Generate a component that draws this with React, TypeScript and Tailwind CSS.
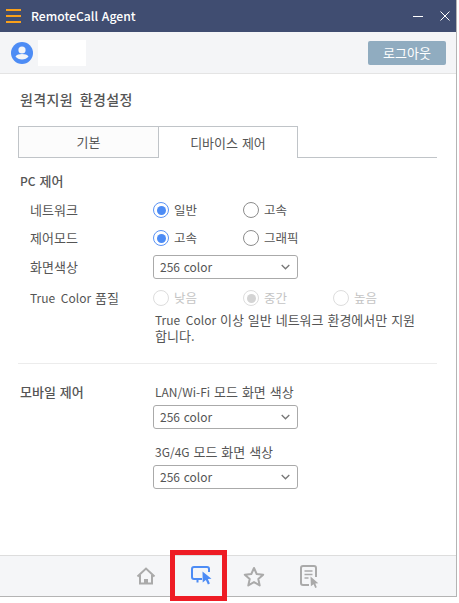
const font = "font-['Noto_Sans_CJK_KR','Noto_Sans',sans-serif]";

function Radio({ label, checked, disabled, width }: { label: string; checked?: boolean; disabled?: boolean; width: string }) {
  const ring = disabled ? "border-[#dddddd]" : checked ? "border-[#5b93f5]" : "border-[#8c8c8c]";
  const dot = disabled ? "bg-[#d4d4d4]" : "bg-[#4d8cf5]";
  return (
    <div className={`flex items-center gap-[5px] ${width}`}>
      <span className={`flex h-[16px] w-[16px] items-center justify-center rounded-full border-[1.5px] ${ring}`}>
        {checked && <span className={`h-[9px] w-[9px] rounded-full ${dot}`} />}
      </span>
      <span className={`text-[12.5px] ${disabled ? "text-[#c4c4c4]" : "text-[#555555]"}`}>{label}</span>
    </div>
  );
}

function ColorSelect() {
  return (
    <div className="flex h-[24px] w-[145px] items-center justify-between rounded-[3px] border border-[#aaaaaa] bg-white pl-[6px] pr-[7px] text-[12px] text-[#555555]">
      <span>256 color</span>
      <svg width="9" height="6" viewBox="0 0 9 6" fill="none" stroke="#777777" strokeWidth="1.3">
        <path d="M.7 1l3.800 3.800L8.300 1" />
      </svg>
    </div>
  );
}

function HomeIcon() {
  return (
    <svg width="20" height="18" viewBox="0 0 20 18" fill="none" stroke="#aaaaaa" strokeWidth="2">
      <path d="M1.500 9.500L10 1.500l8.500 8" />
      <path d="M4 8v8.500h12V8" />
      <path d="M8 17v-5h4v5" fill="#aaaaaa" stroke="none" />
    </svg>
  );
}

function RemoteIcon() {
  return (
    <svg width="22" height="20" viewBox="0 0 22 20" fill="none">
      <path d="M11 13H3a2 2 0 01-2-2V3a2 2 0 012-2h13a2 2 0 012 2v3" stroke="#4d8cf5" strokeWidth="2" />
      <path d="M6.500 13v3.500" stroke="#4d8cf5" strokeWidth="2" />
      <path d="M11.500 5.500l9 7.200-3.600.4 2 4.500-2 .9-2-4.500-3.200 2.400z" fill="#4d8cf5" />
    </svg>
  );
}

function StarIcon() {
  return (
    <svg width="22" height="21" viewBox="0 0 22 21" fill="none" stroke="#aaaaaa" strokeWidth="2" strokeLinejoin="round">
      <path d="M11 2l2.700 6 6.500.7-4.900 4.300 1.400 6.400L11 16.100l-5.700 3.300 1.400-6.400-4.900-4.300 6.500-.7z" />
    </svg>
  );
}

function ReportIcon() {
  return (
    <svg width="19" height="23" viewBox="0 0 19 23" fill="none">
      <path d="M9 20H3a2 2 0 01-2-2V3a2 2 0 012-2h11a2 2 0 012 2v9" stroke="#aaaaaa" strokeWidth="2" />
      <path d="M4.500 6h8M4.500 9.500h8M4.500 13h4" stroke="#aaaaaa" strokeWidth="1.600" />
      <path d="M10.500 11.500l7.800 6.800-3 .3 1.500 3.600-1.600.7-1.600-3.600-2.700 2z" fill="#aaaaaa" />
    </svg>
  );
}

export default function App() {
  return (
    <div className={`${font} relative flex h-[603px] w-[459px] bg-white text-[13px] text-[#555555] [word-spacing:1px]`}>
      <div className="flex h-[597px] w-[456px] flex-col border-b border-[#b4b4b4]">
        <header className="flex h-[32px] shrink-0 items-center bg-[#404d71] pl-[6px] pr-[6px] text-white">
          <div className="flex h-[14px] w-[15px] flex-col justify-between">
            <span className="h-[2px] bg-[#f9a01b]" />
            <span className="h-[2px] bg-[#f9a01b]" />
            <span className="h-[2px] bg-[#f9a01b]" />
          </div>
          <span className="ml-[10px] text-[12.2px] font-medium">RemoteCall Agent</span>
          <div className="ml-auto flex items-center gap-[17px]">
            <span className="h-[1px] w-[10px] bg-white" />
            <svg width="10" height="10" viewBox="0 0 10 10" stroke="white" strokeWidth="1">
              <path d="M.5.500l9 9M9.500.500l-9 9" />
            </svg>
          </div>
        </header>

        <div className="flex h-[42px] shrink-0 items-center border-b border-[#e4e4e4] bg-[#f4f5f7] pl-[11px] pr-[10px]">
          <svg width="22" height="22" viewBox="0 0 22 22">
            <circle cx="11" cy="11" r="11" fill="#4d8cf5" />
            <circle cx="11" cy="8" r="3.600" fill="#f4f5f7" />
            <path d="M4.500 14.500c1.200-1.800 3.600-2.500 6.500-2.500s5.300.7 6.500 2.500c-1.400 2-3.800 3-6.500 3s-5.100-1-6.500-3z" fill="#f4f5f7" />
          </svg>
          <div className="ml-[5px] h-[26px] w-[48px] bg-white" />
          <button className="ml-auto h-[24px] w-[78px] rounded-[2px] bg-[#90acc0] text-[13px] text-white">로그아웃</button>
        </div>

        <main className="min-h-0 flex-1 pl-[18px] pr-[19px]">
          <h1 className="ml-[2px] mt-[15px] text-[14px] font-medium leading-[20px] tracking-[0.4px] text-[#555555] [word-spacing:3px]">원격지원 환경설정</h1>

          <div className="mt-[17px] flex h-[32px] border-b border-[#c0c4c8]">
            <div className="flex h-[32px] w-[141px] items-center justify-center border border-[#c0c4c8] bg-[#fcfcfc]">기본</div>
            <div className="flex h-[32px] w-[139px] items-center justify-center border border-l-0 border-b-0 border-[#c0c4c8] bg-white">디바이스 제어</div>
          </div>

          <h2 className="ml-[2px] mt-[14px] font-medium leading-[18px] text-[#555555]">
            <span className="text-[12px]">PC</span> 제어
          </h2>

          <div className="mt-[10px] flex h-[20px] items-center pl-[12px]">
            <span className="w-[123px]">네트워크</span>
            <Radio label="일반" checked width="w-[90px]" />
            <Radio label="고속" width="w-[90px]" />
          </div>
          <div className="mt-[8px] flex h-[20px] items-center pl-[12px]">
            <span className="w-[123px]">제어모드</span>
            <Radio label="고속" checked width="w-[90px]" />
            <Radio label="그래픽" width="w-[90px]" />
          </div>
          <div className="mt-[7px] flex h-[24px] items-center pl-[12px]">
            <span className="w-[123px]">화면색상</span>
            <ColorSelect />
          </div>
          <div className="mt-[9px] flex h-[20px] items-center pl-[12px]">
            <span className="w-[123px]">
              <span className="text-[12px] [word-spacing:3px]">True Color</span> 품질
            </span>
            <Radio label="낮음" disabled width="w-[90px]" />
            <Radio label="중간" checked disabled width="w-[90px]" />
            <Radio label="높음" disabled width="w-[90px]" />
          </div>
          <p className="ml-[137px] mt-[4px] w-[265px] break-keep leading-[16px]">
            <span className="text-[12px] [word-spacing:3px]">True Color</span> 이상 일반 네트워크 환경에서만 지원 합니다.
          </p>

          <div className="mt-[19px] border-t border-[#ececec]" />

          <div className="mt-[18px] flex">
            <span className="ml-[2px] w-[133px] font-medium leading-[20px]">모바일 제어</span>
            <div className="flex flex-col">
              <span className="ml-[2px] leading-[20px]">
                <span className="text-[12px]">LAN/Wi-Fi</span> 모드 화면 색상
              </span>
              <div className="mt-[3px]"><ColorSelect /></div>
              <span className="ml-[2px] mt-[13px] leading-[20px]">
                <span className="text-[12px]">3G/4G</span> 모드 화면 색상
              </span>
              <div className="mt-[3px]"><ColorSelect /></div>
            </div>
          </div>
        </main>

        <footer className="flex h-[41px] shrink-0 items-center border-t border-[#dddddd] bg-[#f5f6f8] pl-[136px]">
          <span className="flex w-[20px] justify-center"><HomeIcon /></span>
          <span className="ml-[35px] flex w-[22px] justify-center"><RemoteIcon /></span>
          <span className="ml-[30px] flex w-[22px] justify-center"><StarIcon /></span>
          <span className="ml-[35px] flex w-[19px] justify-center"><ReportIcon /></span>
        </footer>
      </div>
      <div className="h-[597px] w-[1px] bg-[#b4b4b4]" />

      {/* red highlight drawn over the tab bar */}
      <div className="absolute left-[170px] top-[550px] h-[51px] w-[57px] border-[5px] border-[#ee1c25]" />
    </div>
  );
}
